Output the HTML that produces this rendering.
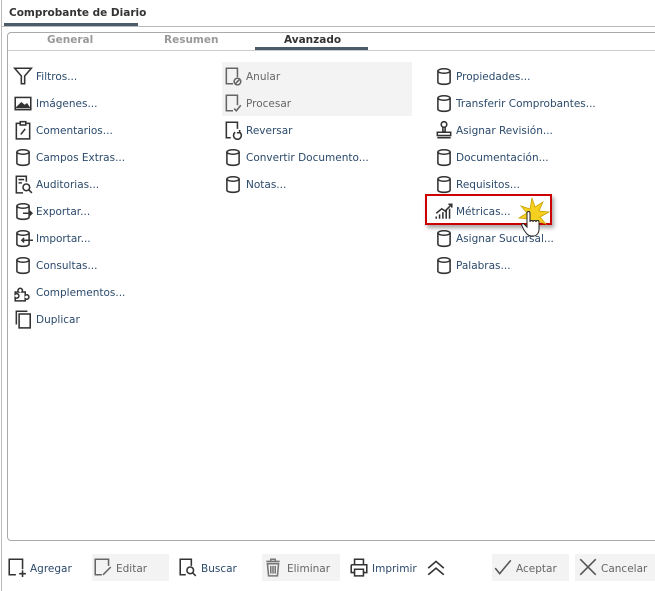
<!DOCTYPE html>
<html><head><meta charset="utf-8"><style>
body{margin:0;width:655px;height:591px;background:#fff;position:relative;overflow:hidden;font-family:"DejaVu Sans","Liberation Sans",sans-serif;font-size:10.5px;color:#2b4a6b}
.a{position:absolute;white-space:nowrap}
svg.i{position:absolute;width:20px;height:20px;margin:-1px 0 0 -1px;fill:none;stroke:#333;stroke-width:1.4}
.t{position:absolute;line-height:14px;margin-top:1px}
.g{color:#666}
</style></head><body>
<div class="a" style="left:1px;top:0;width:1px;height:591px;background:#bbb"></div>
<div class="a" style="left:9px;top:7px;font-weight:bold;font-size:10.5px;color:#333">Comprobante de Diario</div>
<div class="a" style="left:4px;top:23px;width:134px;height:3px;background:#4b5b68"></div>
<div class="a" style="left:1px;top:26px;width:654px;height:1px;background:#bbb"></div>
<div class="a" style="left:7px;top:32px;width:660px;height:507px;border:1px solid #aaa;border-radius:4px"></div>
<div class="a" style="left:8px;top:50px;width:650px;height:1px;background:#ccc"></div>
<div class="a" style="left:47px;top:34px;font-weight:bold;color:#999">General</div>
<div class="a" style="left:164px;top:34px;font-weight:bold;color:#999">Resumen</div>
<div class="a" style="left:284px;top:34px;font-weight:bold;color:#333">Avanzado</div>
<div class="a" style="left:255px;top:47px;width:113px;height:3px;background:#4b5b68"></div>
<div class="a" style="left:222px;top:62px;width:190px;height:54px;background:#f3f3f3"></div>

<svg style="display:none"><defs>
<g id="cyl"><ellipse cx="9" cy="4.5" rx="5.5" ry="2"/><path d="M3.5 4.5v10c0 1.2 2.5 2 5.5 2s5.5-.8 5.5-2v-10"/></g>
</defs></svg>

<svg class="i" style="left:14px;top:67px" viewBox="0 0 18 18"><path d="M1.5 2h15l-6 7v7h-3v-7z"/></svg><div class="t" style="left:36px;top:69px">Filtros...</div>
<svg class="i" style="left:14px;top:94px" viewBox="0 0 18 18"><rect x="2" y="4" width="14" height="11"/><path d="M3.5 13l4-4 3 2.5 2-1.5 2 3z" fill="#333"/></svg><div class="t" style="left:36px;top:96px">Imágenes...</div>
<svg class="i" style="left:14px;top:121px" viewBox="0 0 18 18"><rect x="3" y="3" width="12" height="14"/><rect x="6.5" y="1.5" width="5" height="3" fill="#fff"/><path d="M7 13l4-5"/></svg><div class="t" style="left:36px;top:123px">Comentarios...</div>
<svg class="i" style="left:14px;top:148px" viewBox="0 0 18 18"><use href="#cyl"/></svg><div class="t" style="left:36px;top:150px">Campos Extras...</div>
<svg class="i" style="left:14px;top:175px" viewBox="0 0 18 18"><path d="M12 7V2H3v15h6"/><path d="M5 5h5M5 8h3"/><circle cx="12" cy="12" r="3"/><path d="M14 14l3 3"/></svg><div class="t" style="left:36px;top:177px">Auditorias...</div>
<svg class="i" style="left:14px;top:202px" viewBox="0 0 18 18"><use href="#cyl"/><path d="M9 11h8M15 9l2 2-2 2"/></svg><div class="t" style="left:36px;top:204px">Exportar...</div>
<svg class="i" style="left:14px;top:229px" viewBox="0 0 18 18"><use href="#cyl"/><path d="M8 11h10M10 9l-2 2 2 2"/></svg><div class="t" style="left:36px;top:231px">Importar...</div>
<svg class="i" style="left:14px;top:256px" viewBox="0 0 18 18"><use href="#cyl"/></svg><div class="t" style="left:36px;top:258px">Consultas...</div>
<svg class="i" style="left:14px;top:283px" viewBox="0 0 18 18"><path d="M2 9h3a2 2 0 1 1 3 0h3v3a2 2 0 1 1 0 3v2H2v-3a2 2 0 1 0 0-3z"/></svg><div class="t" style="left:36px;top:285px">Complementos...</div>
<svg class="i" style="left:14px;top:310px" viewBox="0 0 18 18"><path d="M3 14V2h10"/><rect x="5.5" y="4.5" width="10" height="12.5"/></svg><div class="t" style="left:36px;top:312px">Duplicar</div>

<svg class="i" style="left:224px;top:67px;stroke:#666" viewBox="0 0 18 18"><path d="M9 16H3V2h10v8"/><circle cx="13" cy="14" r="3"/><path d="M11 16l4-4"/></svg><div class="t g" style="left:246px;top:69px">Anular</div>
<svg class="i" style="left:224px;top:94px;stroke:#666" viewBox="0 0 18 18"><path d="M9 16H3V2h10v9"/><path d="M10 14l2 2 4-5"/></svg><div class="t g" style="left:246px;top:96px">Procesar</div>
<svg class="i" style="left:224px;top:121px" viewBox="0 0 18 18"><path d="M7 16H3V2h10v6"/><path d="M11 11a3.5 3.5 0 1 0 4 0M15 9v2.5h-2.5"/></svg><div class="t" style="left:246px;top:123px">Reversar</div>
<svg class="i" style="left:224px;top:148px" viewBox="0 0 18 18"><use href="#cyl"/></svg><div class="t" style="left:246px;top:150px">Convertir Documento...</div>
<svg class="i" style="left:224px;top:175px" viewBox="0 0 18 18"><use href="#cyl"/></svg><div class="t" style="left:246px;top:177px">Notas...</div>

<svg class="i" style="left:435px;top:67px" viewBox="0 0 18 18"><use href="#cyl"/></svg><div class="t" style="left:456px;top:69px">Propiedades...</div>
<svg class="i" style="left:435px;top:94px" viewBox="0 0 18 18"><use href="#cyl"/></svg><div class="t" style="left:456px;top:96px">Transferir Comprobantes...</div>
<svg class="i" style="left:435px;top:121px" viewBox="0 0 18 18"><circle cx="9" cy="4" r="2.5"/><path d="M8 6.5v4h2v-4M3 11h12v3H3zM3 16h12"/></svg><div class="t" style="left:456px;top:123px">Asignar Revisión...</div>
<svg class="i" style="left:435px;top:148px" viewBox="0 0 18 18"><use href="#cyl"/></svg><div class="t" style="left:456px;top:150px">Documentación...</div>
<svg class="i" style="left:435px;top:175px" viewBox="0 0 18 18"><use href="#cyl"/></svg><div class="t" style="left:456px;top:177px">Requisitos...</div>
<div class="a" style="left:425px;top:194px;width:127px;height:31px;border:2px solid #c00;box-sizing:border-box;box-shadow:2px 3px 4px rgba(0,0,0,.35);background:#fff"></div>
<svg class="i" style="left:435px;top:202px" viewBox="0 0 18 18"><path d="M2 16v-2M5 16v-4M8 16v-6M11 16v-8M14 16v-9M2 11l5-4 3 2 6-6M13 3h3v3"/></svg><div class="t" style="left:456px;top:204px">Métricas...</div>
<svg class="i" style="left:435px;top:229px" viewBox="0 0 18 18"><use href="#cyl"/></svg><div class="t" style="left:456px;top:231px">Asignar Sucursal...</div>
<svg class="i" style="left:435px;top:256px" viewBox="0 0 18 18"><use href="#cyl"/></svg><div class="t" style="left:456px;top:258px">Palabras...</div>
<svg class="a" style="left:515px;top:196px" width="40" height="48" viewBox="0 0 40 48"><path d="M17 2l3 9 8-5-4 9 10 1-9 5 6 7-9-3-1 9-4-8-6 6 2-9-9-1 8-5-6-7 9 3z" fill="#f5d020" stroke="#c9a000" stroke-width=".8"/><path d="M12 17c0-2 3-2 3 0v9c0-2 3-2 3 0 0-2 3-2 3 0 0-2 3-2 3 0v7c0 4-2 7-6 7h-2c-3 0-5-3-7-6l-2-4c-1-2 1-3 2-2l3 3z" fill="#fff" stroke="#222" stroke-width="1"/></svg>

<div class="a" style="left:92px;top:554px;width:77px;height:27px;background:#f3f3f3"></div>
<div class="a" style="left:262px;top:554px;width:78px;height:27px;background:#f3f3f3"></div>
<div class="a" style="left:492px;top:554px;width:77px;height:27px;background:#f3f3f3"></div>
<div class="a" style="left:575px;top:554px;width:80px;height:27px;background:#f3f3f3"></div>
<svg class="i" style="left:8px;top:558px" viewBox="0 0 18 18"><path d="M8 16H2V2h12v9M14 12v6M11 15h6"/></svg><div class="t" style="left:30px;top:561px">Agregar</div>
<svg class="i" style="left:94px;top:558px;stroke:#666" viewBox="0 0 18 18"><path d="M8 16H2V2h12v6M9 16l7-7"/></svg><div class="t g" style="left:116px;top:561px">Editar</div>
<svg class="i" style="left:179px;top:558px" viewBox="0 0 18 18"><path d="M7 16H2V2h10v6"/><circle cx="11" cy="12" r="3"/><path d="M13 14l3 3"/></svg><div class="t" style="left:201px;top:561px">Buscar</div>
<svg class="i" style="left:264px;top:558px;stroke:#777" viewBox="0 0 18 18"><path d="M3 4h12M7 4V2h4v2M4 6h10l-1 11H5zM7 8v7M9 8v7M11 8v7"/></svg><div class="t g" style="left:287px;top:561px">Eliminar</div>
<svg class="i" style="left:350px;top:558px" viewBox="0 0 18 18"><path d="M5 7V2h8v5M2 7h14v7h-3M2 7v7h3M5 11h8v6H5z"/></svg><div class="t" style="left:372px;top:561px">Imprimir</div>
<svg class="i" style="left:427px;top:558px" viewBox="0 0 18 18"><path d="M2 10l7-6 7 6M2 16l7-6 7 6"/></svg>
<svg class="i" style="left:494px;top:558px;stroke:#555" viewBox="0 0 18 18"><path d="M2 10l4 5 10-12"/></svg><div class="t g" style="left:516px;top:561px">Aceptar</div>
<svg class="i" style="left:579px;top:558px;stroke:#555" viewBox="0 0 18 18"><path d="M2 2l14 14M16 2L2 16"/></svg><div class="t g" style="left:601px;top:561px">Cancelar</div>
</body></html>
